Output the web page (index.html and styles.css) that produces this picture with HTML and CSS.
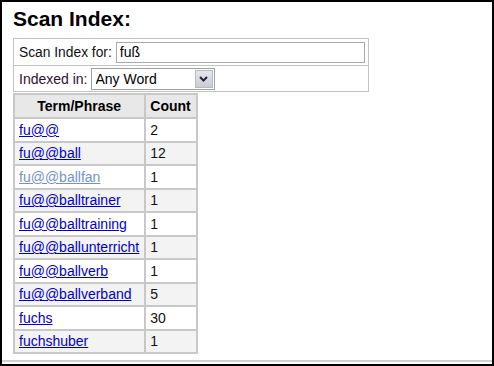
FILE: index.html
```html
<!DOCTYPE html>
<html>
    <head>
        <title>Scan Index</title>
        <link rel="stylesheet" href="styles.css">
    </head>
    <body>
        <div class="window">
            <div class="content">
                <h2 class="title">Scan Index:</h2>

                <div class="search-box">
                    <div class="search-row">
                        <label for="term" class="lbl">Scan Index for:</label>
                        <input id="term" class="query" type="text" value="fuß">
                    </div>
                    <div class="search-row search-row-last">
                        <label for="field" class="lbl lbl-in">Indexed in:</label>
                        <div class="select-wrap">
                            <select id="field" class="field">
                                <option>Any Word</option>
                                <option>Title</option>
                                <option>Author</option>
                            </select>
                            <span class="select-btn">
                                <svg width="9" height="6" viewBox="0 0 9 6"><path d="M1 1 L4.5 4.5 L8 1" fill="none" stroke="#1e2a3a" stroke-width="2"/></svg>
                            </span>
                        </div>
                    </div>
                </div>

                <table class="results">
                    <tr>
                        <th class="col-term">Term/Phrase</th>
                        <th class="col-count">Count</th>
                    </tr>
                    <tr><td><a href="#">fu@@</a></td><td>2</td></tr>
                    <tr class="alt"><td><a href="#">fu@@ball</a></td><td>12</td></tr>
                    <tr><td><a href="#" class="seen">fu@@ballfan</a></td><td>1</td></tr>
                    <tr class="alt"><td><a href="#">fu@@balltrainer</a></td><td>1</td></tr>
                    <tr><td><a href="#">fu@@balltraining</a></td><td>1</td></tr>
                    <tr class="alt"><td><a href="#">fu@@ballunterricht</a></td><td>1</td></tr>
                    <tr><td><a href="#">fu@@ballverb</a></td><td>1</td></tr>
                    <tr class="alt"><td><a href="#">fu@@ballverband</a></td><td>5</td></tr>
                    <tr><td><a href="#">fuchs</a></td><td>30</td></tr>
                    <tr class="alt"><td><a href="#">fuchshuber</a></td><td>1</td></tr>
                </table>
            </div>
            <div class="footer-line"></div>
        </div>
    </body>
</html>
```

FILE: styles.css
```css
body{
    margin: 0;
    background: #fff;
    font-family: "Liberation Sans", Arial, sans-serif;
}
.window{
    box-sizing: border-box;
    width: 494px;
    height: 366px;
    border: 2px solid #000;
    display: flex;
    flex-direction: column;
    overflow: hidden;
}
.content{
    flex: 1;
    padding: 5px 0 0 11px;
}
.title{
    margin: 0 0 7px 0;
    font-size: 21px;
    line-height: 24px;
    font-weight: bold;
    color: #000;
}
.search-box{
    width: 354px;
    border: 1px solid #c3c3c3;
}
.search-row{
    display: flex;
    align-items: center;
    height: 26px;
    padding: 0 3px 0 5px;
    border-bottom: 1px solid #c3c3c3;
}
.search-row-last{
    height: 25px;
    border-bottom: none;
}
.lbl{
    font-size: 13.8px;
    color: #111;
    margin-right: 4px;
}
.lbl-in{
    font-size: 14px;
    color: #2c1238;
    margin-right: 3px;
}
.query{
    flex: 1;
    box-sizing: border-box;
    height: 21px;
    margin: 0;
    padding: 0 3px;
    border: 1px solid #a9a9a9;
    font-family: "Liberation Sans", Arial, sans-serif;
    font-size: 14px;
    color: #000;
    outline: none;
}
.select-wrap{
    display: flex;
    box-sizing: border-box;
    width: 124px;
    height: 22px;
    margin-top: 1px;
    border: 1px solid #a0a0a0;
    background: #fff;
}
.field{
    flex: 1;
    -webkit-appearance: none;
    appearance: none;
    border: none;
    background: transparent;
    padding: 0 0 0 4px;
    margin: 0;
    font-family: "Liberation Sans", Arial, sans-serif;
    font-size: 14px;
    color: #000;
    outline: none;
}
.select-btn{
    display: flex;
    align-items: center;
    justify-content: center;
    width: 16px;
    margin: 1px;
    border: 1px solid #b4bac4;
    background: linear-gradient(#e4e6ea, #c8ccd4);
}
.results{
    border-collapse: collapse;
    margin-top: 1px;
    font-size: 14px;
}
.results th,
.results td{
    border: 2px solid #c8c8c8;
    height: 21.5px;
    padding: 0 5px 0 4px;
    text-align: left;
    color: #111;
}
.results th{
    background: #e8e8e8;
    font-weight: bold;
    height: 22px;
    color: #000;
}
.results th.col-term{
    text-align: center;
}
.col-term{
    width: 119px;
}
.col-count{
    width: 38px;
}
.results tr.alt td{
    background: #f3f3f3;
}
.results a{
    color: #0000cc;
}
.results a.seen{
    color: #7592c6;
}
.footer-line{
    height: 2px;
    border-top: 2px solid #d0d0d0;
}
```
